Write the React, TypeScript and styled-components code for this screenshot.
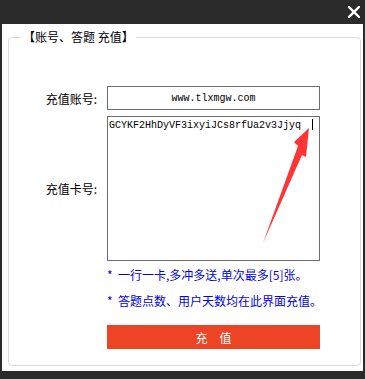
import React from 'react';
import styled, { createGlobalStyle } from 'styled-components';

const GlobalStyle = createGlobalStyle`
  html, body {
    margin: 0;
    padding: 0;
    background: #2b2b2b;
  }
  body {
    width: 365px;
    height: 379px;
    overflow: hidden;
    font-family: "Noto Sans CJK SC", "Noto Sans", sans-serif;
  }
`;

const Window = styled.div`
  width: 365px;
  height: 379px;
  background: #2b2b2b;
  display: flex;
  flex-direction: column;
`;

const TitleBar = styled.div`
  height: 24px;
  display: flex;
  justify-content: flex-end;
  align-items: center;
  padding-right: 4px;
  box-sizing: border-box;
`;

const CloseButton = styled.button`
  width: 14px;
  height: 14px;
  padding: 0;
  border: none;
  background: none;
  display: flex;
  align-items: center;
  justify-content: center;
  cursor: pointer;
`;

const Panel = styled.div`
  height: 347px;
  margin: 0 2px;
  background: #fff;
  padding: 6px 2px 5px 6px;
  box-sizing: border-box;
  display: flex;
  flex-direction: column;
`;

const Group = styled.fieldset`
  flex: 1;
  margin: 0;
  border: 1px solid #dcdcdc;
  border-radius: 4px;
  padding: 42px 0 0 0;
  display: flex;
  flex-direction: column;
  min-width: 0;
`;

const Legend = styled.legend`
  margin-left: 12px;
  padding: 0 2px;
  font-size: 12px;
  line-height: 14px;
  color: #000;
`;

const Row = styled.div<{ $gap?: number }>`
  display: grid;
  grid-template-columns: 88px 213px;
  column-gap: 10px;
  align-items: center;
  margin-top: ${p => p.$gap ?? 0}px;
`;

const Label = styled.label`
  font-size: 12px;
  color: #000;
  text-align: right;
`;

const AccountInput = styled.input`
  width: 213px;
  height: 24px;
  box-sizing: border-box;
  border: 1px solid #6e6e6e;
  margin: 0;
  padding: 0;
  text-align: center;
  font-family: "Liberation Mono", monospace;
  font-size: 10px;
  color: #000;
  background: #fff;
  outline: none;
`;

const CardBox = styled.div`
  position: relative;
  width: 213px;
  height: 145px;
  box-sizing: border-box;
  border: 1px solid #6e6e6e;
  padding: 2px 1px;
  font-family: "Liberation Mono", monospace;
  font-size: 10px;
  line-height: 11px;
  color: #000;
  white-space: pre;
`;

const Caret = styled.span`
  display: inline-block;
  width: 1px;
  height: 11px;
  background: #000;
  margin-left: 11px;
  vertical-align: -2px;
`;

const Arrow = styled.svg`
  position: absolute;
  left: 0;
  top: 0;
  pointer-events: none;
`;

const Notes = styled.div`
  margin-left: 98px;
  margin-top: 1px;
  display: flex;
  flex-direction: column;
`;

const Note = styled.div`
  font-size: 12px;
  line-height: 26px;
  color: #0000ee;
  white-space: nowrap;
`;

const Star = styled.span`
  display: inline-block;
  width: 11px;
`;

const SubmitButton = styled.button`
  margin: 11px 0 0 98px;
  width: 213px;
  height: 24px;
  border: none;
  padding: 0;
  background: #ee4426;
  color: #fff;
  font-family: "Noto Sans CJK SC", sans-serif;
  font-size: 12px;
  cursor: pointer;
`;

const notes = ['一行一卡,多冲多送,单次最多[5]张。', '答题点数、用户天数均在此界面充值。'];

export default function App() {
  return (
    <Window>
      <GlobalStyle />
      <TitleBar>
        <CloseButton aria-label="关闭">
          <svg width="12" height="12" viewBox="0 0 12 12">
            <path d="M1 1 L11 11 M11 1 L1 11" stroke="#fff" strokeWidth="2.4" strokeLinecap="square" />
          </svg>
        </CloseButton>
      </TitleBar>
      <Panel>
        <Group>
          <Legend>【账号、答题 充值】</Legend>
          <Row>
            <Label>充值账号:</Label>
            <AccountInput readOnly value="www.tlxmgw.com" />
          </Row>
          <Row $gap={6}>
            <Label>充值卡号:</Label>
            <CardBox>
              GCYKF2HhDyVF3ixyiJCs8rfUa2v3Jjyq<Caret />
              <Arrow width="213" height="145" viewBox="0 0 213 145">
                <path d="M201 11 L186 25 L190 29 L155 126 L194 38 L198 40 Z" fill="#ff3535" />
              </Arrow>
            </CardBox>
          </Row>
          <Notes>
            {notes.map(n => (
              <Note key={n}>
                <Star>*</Star>
                {n}
              </Note>
            ))}
          </Notes>
          <SubmitButton>充　值</SubmitButton>
        </Group>
      </Panel>
    </Window>
  );
}
